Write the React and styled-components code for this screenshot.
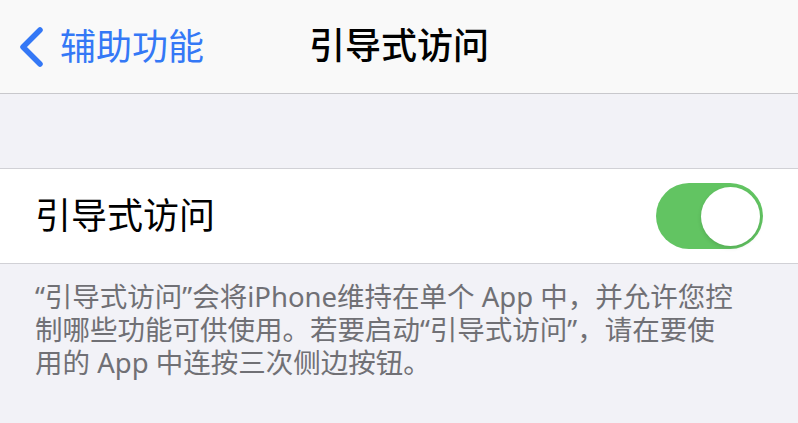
import React from "react";
import styled, { createGlobalStyle } from "styled-components";

const Global = createGlobalStyle`
  html, body { margin: 0; padding: 0; background: #f2f2f7; }
  body { font-family: "Noto Sans", "Noto Sans CJK SC", sans-serif; -webkit-font-smoothing: antialiased; }
`;

const Page = styled.div`
  width: 798px;
  height: 423px;
  background: #f2f2f7;
  display: flex;
  flex-direction: column;
  overflow: hidden;
`;

const NavBar = styled.div`
  height: 93px;
  background: #f9f9f9;
  border-bottom: 1px solid #c8c8cc;
  display: grid;
  grid-template-columns: 1fr auto 1fr;
  align-items: center;
  flex-shrink: 0;
`;

const BackButton = styled.div`
  display: flex;
  align-items: center;
  gap: 16px;
  padding-left: 19px;
  color: #3478f6;
  font-size: 36px;
  line-height: 1;
`;

const Title = styled.div`
  font-size: 36px;
  line-height: 1;
  color: #000;
  font-weight: 500;
  padding-bottom: 2px;
`;

const Spacer = styled.div`
  height: 74px;
  flex-shrink: 0;
`;

const Row = styled.div`
  height: 94px;
  background: #fff;
  border-top: 1px solid #d1d1d6;
  border-bottom: 1px solid #d1d1d6;
  display: flex;
  align-items: center;
  justify-content: space-between;
  padding: 0 35px;
  flex-shrink: 0;
`;

const Label = styled.div`
  font-size: 36px;
  color: #000;
  line-height: 1;
`;

const Toggle = styled.div`
  width: 107px;
  height: 66px;
  border-radius: 33px;
  background: ${(p) => (p.$on ? "#62c462" : "#e9e9eb")};
  position: relative;
`;

const Knob = styled.div`
  position: absolute;
  top: 3.5px;
  right: ${(p) => (p.$on ? "3.5px" : "auto")};
  left: ${(p) => (p.$on ? "auto" : "3.5px")};
  width: 59px;
  height: 59px;
  border-radius: 50%;
  background: #fff;
  box-shadow: 0 2px 4px rgba(0, 0, 0, 0.12);
`;

const Footer = styled.div`
  padding: 16px 35px 0 35px;
  font-size: 27.5px;
  line-height: 33px;
  color: #707075;
`;

const FooterLine = styled.div`
  white-space: nowrap;
  height: 33px;
`;

function Chevron() {
  return (
    <svg width="25" height="40" viewBox="0 0 25 40" fill="none">
      <path
        d="M21 3 L4 20 L21 37"
        stroke="#3478f6"
        strokeWidth="5.5"
        strokeLinecap="round"
        strokeLinejoin="round"
      />
    </svg>
  );
}

export default function App() {
  return (
    <Page>
      <Global />
      <NavBar>
        <BackButton>
          <Chevron />
          <span>辅助功能</span>
        </BackButton>
        <Title>引导式访问</Title>
        <div />
      </NavBar>
      <Spacer />
      <Row>
        <Label>引导式访问</Label>
        <Toggle $on>
          <Knob $on />
        </Toggle>
      </Row>
      <Footer>
        <FooterLine>“引导式访问”会将iPhone维持在单个 App 中，并允许您控</FooterLine>
        <FooterLine>制哪些功能可供使用。若要启动“引导式访问”，请在要使</FooterLine>
        <FooterLine>用的 App 中连按三次侧边按钮。</FooterLine>
      </Footer>
    </Page>
  );
}
